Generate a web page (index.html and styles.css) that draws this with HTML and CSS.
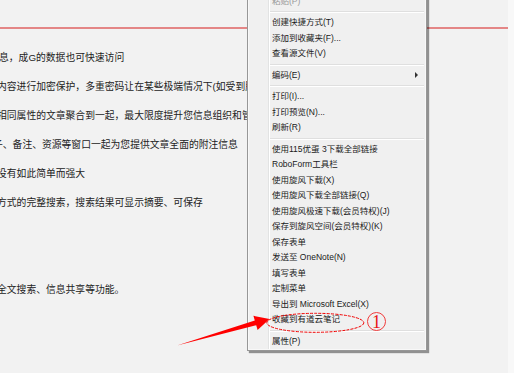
FILE: index.html
```html
<!DOCTYPE html>
<html lang="zh-CN">

<head>
    <meta charset="UTF-8">
    <title>右键菜单</title>
    <link rel="stylesheet" href="styles.css">
</head>

<body>

    <div class="screen">

        <div class="doc">
            <!-- page header ends in the red rule -->
            <div class="doc-head"></div>
            <div class="doc-body">
                <p class="line line-first">息，成G的数据也可快速访问</p>
                <p class="line">内容进行加密保护，多重密码让在某些极端情况下(如受到胁</p>
                <p class="line">相同属性的文章聚合到一起，最大限度提升您信息组织和管</p>
                <p class="line line-cut">子、备注、资源等窗口一起为您提供文章全面的附注信息</p>
                <p class="line">没有如此简单而强大</p>
                <p class="line">方式的完整搜索，搜索结果可显示摘要、可保存</p>
                <p class="line line-far">全文搜索、信息共享等功能。</p>
            </div>
        </div>
        <div class="edge"></div>

        <!-- context menu -->
        <div class="menu">
            <div class="item is-disabled">粘贴(P)</div>
            <div class="sep"></div>
            <div class="item">创建快捷方式(T)</div>
            <div class="item">添加到收藏夹(F)...</div>
            <div class="item">查看源文件(V)</div>
            <div class="sep"></div>
            <div class="item has-sub">编码(E)<span class="sub-arrow"></span></div>
            <div class="sep"></div>
            <div class="item">打印(I)...</div>
            <div class="item">打印预览(N)...</div>
            <div class="item">刷新(R)</div>
            <div class="sep"></div>
            <div class="item">使用115优蛋 3下载全部链接</div>
            <div class="item">RoboForm工具栏</div>
            <div class="item">使用旋风下载(X)</div>
            <div class="item">使用旋风下载全部链接(Q)</div>
            <div class="item">使用旋风极速下载(会员特权)(J)</div>
            <div class="item">保存到旋风空间(会员特权)(K)</div>
            <div class="item">保存表单</div>
            <div class="item">发送至 OneNote(N)</div>
            <div class="item">填写表单</div>
            <div class="item">定制菜单</div>
            <div class="item">导出到 Microsoft Excel(X)</div>
            <div class="item">收藏到有道云笔记</div>
            <div class="sep"></div>
            <div class="item">属性(P)</div>
        </div>

        <!-- annotation marks drawn over the screenshot -->
        <svg class="marks" width="514" height="373" viewBox="0 0 514 373">
            <polygon class="mark-arrow" points="177,345.5 254.8,320.4 253.4,315.8 269.5,319 257.6,330 256.2,325.2"></polygon>
            <ellipse class="mark-ring" cx="315.3" cy="322.8" rx="48.5" ry="9.5"></ellipse>
        </svg>
        <span class="mark-num">1</span>

    </div>

</body>

</html>
```

FILE: styles.css
```css
body {
    margin: 0;
    overflow: hidden;
}

.screen {
    position: relative;
    display: flex;
    height: 373px;
    overflow: hidden;
    background: #f8f8f8;
}

.doc {
    width: 508px;
    flex: none;
    background: #f2f2f2;
    overflow: hidden;
}

.edge {
    flex: 1;
}

.doc-head {
    height: 27px;
    border-bottom: 2px solid #e48686;
}

.doc-body {
    padding-top: 13.5px;
    font-family: "Liberation Sans", "Noto Sans CJK SC", sans-serif;
    font-size: 9.8px;
    line-height: 29px;
    color: #222222;
}

.line {
    margin: 0 0 0 -3px;
    height: 29px;
    white-space: nowrap;
}

.line-first {
    text-indent: 2px;
}

.line-cut {
    text-indent: -4px;
}

.line-far {
    margin-top: 58px;
}

/* Windows style context menu */
.menu {
    position: absolute;
    left: 247px;
    top: -9.5px;
    width: 180px;
    box-sizing: border-box;
    padding: 2px 2px 1px 2px;
    border: 1px solid #979797;
    background: linear-gradient(to right, transparent 20px, #e2e3e3 20px, #e2e3e3 21px, #ffffff 21px, #ffffff 22px, transparent 22px), #f0f0f0;
    box-shadow: inset 0 0 0 1px #f8f8f8, 2px 2px 1px rgba(0, 0, 0, 0.4);
    font-family: "Liberation Sans", "Noto Sans CJK SC", sans-serif;
    font-size: 8.5px;
    line-height: 15.5px;
    color: #1a1a1a;
}

.item {
    height: 15.5px;
    padding-left: 22px;
    white-space: nowrap;
}

.item.is-disabled {
    color: #9a9a9a;
}

.item.has-sub {
    display: flex;
    justify-content: space-between;
    align-items: center;
    padding-right: 6px;
}

.sub-arrow {
    width: 0;
    height: 0;
    border-left: 3px solid #333333;
    border-top: 3px solid transparent;
    border-bottom: 3px solid transparent;
}

.sep {
    height: 6px;
    margin-left: 20px;
}

.sep::after {
    content: "";
    display: block;
    padding-top: 2px;
    border-bottom: 1px solid #dfdfdf;
    box-shadow: 0 1px 0 #ffffff;
}

.marks {
    position: absolute;
    left: 0;
    top: 0;
    pointer-events: none;
}

.mark-arrow {
    fill: #ff0000;
}

.mark-ring {
    fill: none;
    stroke: #f00000;
    stroke-width: 1;
    stroke-dasharray: 3 1.2;
}

.mark-num {
    position: absolute;
    left: 367px;
    top: 312px;
    width: 17px;
    height: 17px;
    border: 1px solid #f03c3c;
    border-radius: 50%;
    font-family: "Liberation Serif", serif;
    font-size: 18px;
    line-height: 18px;
    text-align: center;
    color: #e81818;
}
```
